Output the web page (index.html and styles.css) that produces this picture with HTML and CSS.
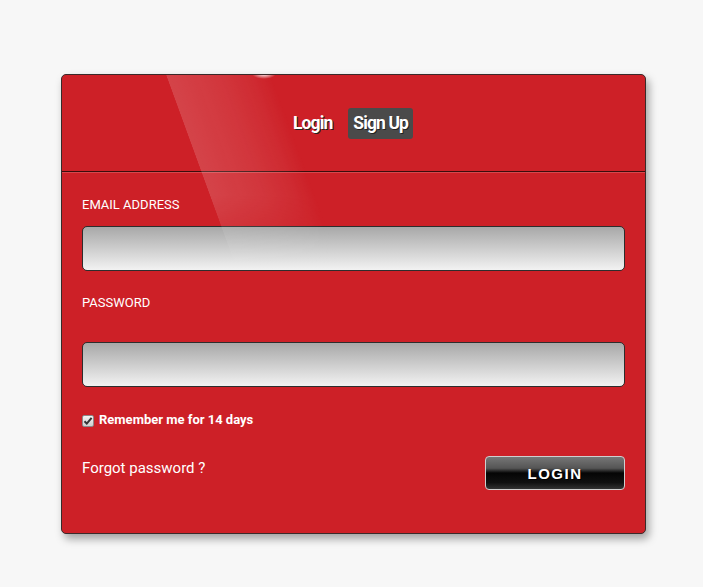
FILE: index.html
```html
<!DOCTYPE html>
<html>
<head>
<meta charset="utf-8">
<link rel="stylesheet" href="styles.css">
</head>
<body>
<div class="page">
  <div class="card">
    <div class="gloss"></div>
    <div class="glow"></div>
    <div class="header">
      <span class="tab">Login</span>
      <span class="tab active">Sign Up</span>
    </div>
    <form class="form">
      <label class="label">EMAIL ADDRESS</label>
      <input class="field" type="text">
      <label class="label label-pw">PASSWORD</label>
      <input class="field" type="password">
      <div class="remember">
        <span class="check"><svg width="10" height="10" viewBox="0 0 10 10"><path d="M1.5 5.2 L3.8 7.6 L8.6 1.8" fill="none" stroke="#333" stroke-width="2"/></svg></span>
        <span>Remember me for 14 days</span>
      </div>
      <div class="actions">
        <a class="forgot">Forgot password ?</a>
        <button type="button" class="btn">LOGIN</button>
      </div>
    </form>
  </div>
</div>
</body>
</html>
```
FILE: styles.css
```css
html, body { margin: 0; padding: 0; }
body {
  background: #f7f7f7;
  font-family: Roboto, "Liberation Sans", sans-serif;
  width: 703px;
  height: 587px;
  overflow: hidden;
}
.page {
  padding-top: 74px;
  padding-left: 61px;
}
.card {
  position: relative;
  width: 583px;
  height: 458px;
  background: #cd2027;
  border: 1px solid #3a2a2a;
  border-radius: 5px;
  box-shadow: 3px 5px 8px rgba(0,0,0,0.35);
  overflow: hidden;
}
.gloss {
  position: absolute;
  left: 104px;
  top: 0;
  width: 106px;
  height: 200px;
  background: linear-gradient(90deg, rgba(255,255,255,0.16) 0%, rgba(255,255,255,0.10) 50%, rgba(255,255,255,0.05) 80%, rgba(255,255,255,0) 100%);
  -webkit-mask-image: linear-gradient(#000 0%, #000 60%, rgba(0,0,0,0.5) 80%, transparent 100%);
  mask-image: linear-gradient(#000 0%, #000 60%, rgba(0,0,0,0.5) 80%, transparent 100%);
  transform: skewX(20deg);
  transform-origin: top left;
  pointer-events: none;
  z-index: 2;
}
.glow {
  position: absolute;
  left: 190px;
  top: -6px;
  width: 24px;
  height: 10px;
  border-radius: 50%;
  background: radial-gradient(ellipse at center, rgba(255,255,255,0.95), rgba(255,255,255,0) 70%);
  pointer-events: none;
}
.header {
  height: 96px;
  border-bottom: 1px solid #3a0c0c;
  box-shadow: 0 1px 0 rgba(255,255,255,0.18);
  display: flex;
  justify-content: center;
  align-items: center;
  gap: 11px;
  padding-right: 6px;
}
.tab {
  color: #fff;
  font-weight: 700;
  font-size: 17.5px;
  letter-spacing: -0.9px;
  text-shadow: 1px 1px 0 #222;
  padding: 5px 5px 6px 5px;
  border-radius: 3px;
}
.active { background: #4a4a4a; }
.form {
  display: flex;
  flex-direction: column;
  padding: 25px 20px 0 20px;
}
.label {
  color: #fff;
  font-size: 13px;
  line-height: 15px;
  margin-bottom: 14px;
}
.label-pw { margin-top: 24px; margin-bottom: 32px; }
.field {
  box-sizing: border-box;
  width: 543px;
  height: 45px;
  margin: 0;
  border: 1px solid #2d2d2d;
  border-radius: 5px;
  background: linear-gradient(#a8a8a8, #f2f2f2);
}
.remember {
  display: flex;
  align-items: center;
  gap: 5px;
  margin-top: 25px;
  color: #fff;
  font-weight: 700;
  font-size: 13px;
  line-height: 15px;
}
.check {
  box-sizing: border-box;
  width: 12px;
  height: 12px;
  margin-top: 2px;
  border: 1px solid #8a8a8a;
  border-radius: 2px;
  background: linear-gradient(#f4f4f4, #cfcfcf);
  display: flex;
  align-items: center;
  justify-content: center;
}
.actions {
  display: flex;
  justify-content: space-between;
  align-items: flex-start;
  margin-top: 20px;
}
.forgot {
  color: #fff;
  font-size: 15px;
  margin-top: 12px;
}
.btn {
  width: 140px;
  height: 34px;
  margin-top: 9px;
  border: 1px solid #cfcfcf;
  border-radius: 4px;
  background: linear-gradient(#767676 0%, #555 35%, #050505 50%, #111 80%, #333 100%);
  color: #fff;
  font-family: "Liberation Sans", Arial, sans-serif;
  font-weight: 700;
  font-size: 15px;
  letter-spacing: 1.5px;
  text-shadow: 1px 1px 0 #000;
}
```
